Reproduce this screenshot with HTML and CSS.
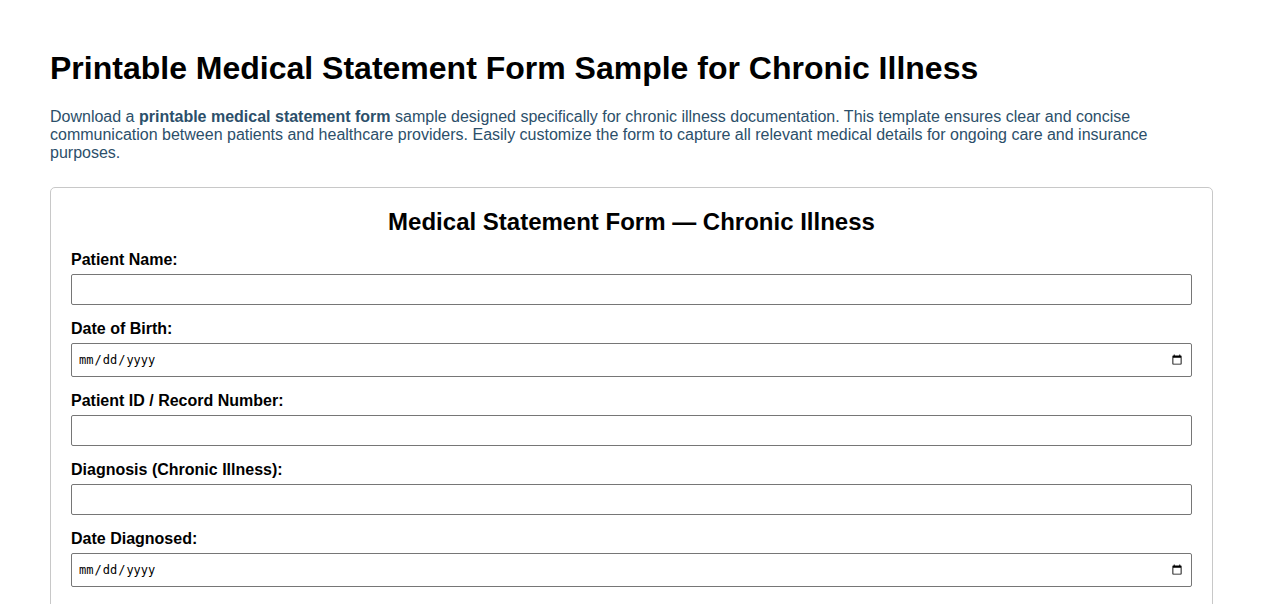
FILE: index.html
```html
<!DOCTYPE html>
<html lang="en">
<head>
<meta charset="utf-8">
<title>Printable Medical Statement Form Sample for Chronic Illness</title>
<link rel="stylesheet" href="styles.css">
</head>
<body>
<main class="page">
  <h1 class="title">Printable Medical Statement Form Sample for Chronic Illness</h1>
  <p class="intro">Download a <strong>printable medical statement form</strong> sample designed specifically for chronic illness documentation. This template ensures clear and concise communication between patients and healthcare providers. Easily customize the form to capture all relevant medical details for ongoing care and insurance purposes.</p>
  <form class="form-box">
    <h2 class="form-title">Medical Statement Form — Chronic Illness</h2>
    <label class="field-label" for="pname">Patient Name:</label>
    <input class="field" type="text" id="pname">
    <label class="field-label" for="dob">Date of Birth:</label>
    <input class="field field-date" type="date" id="dob">
    <label class="field-label" for="pid">Patient ID / Record Number:</label>
    <input class="field" type="text" id="pid">
    <label class="field-label" for="diag">Diagnosis (Chronic Illness):</label>
    <input class="field" type="text" id="diag">
    <label class="field-label" for="ddiag">Date Diagnosed:</label>
    <input class="field field-date" type="date" id="ddiag">
    <label class="field-label" for="hist">Relevant Medical History:</label>
    <textarea class="field field-area" id="hist" rows="4"></textarea>
  </form>
</main>
</body>
</html>
```

FILE: styles.css
```css
html, body {
  margin: 0;
  padding: 0;
  background: #fff;
}
body {
  font-family: "Liberation Sans", Arial, sans-serif;
  color: #000;
}
.page {
  padding: 50px 50px 40px 50px;
}
.title {
  margin: 0;
  font-size: 32px;
  line-height: 37px;
  font-weight: bold;
  color: #000;
}
.intro {
  margin: 21px 0 25px 0;
  font-size: 16px;
  line-height: 18px;
  color: #2c4f6a;
}
.intro strong {
  font-weight: bold;
}
.form-box {
  border: 1px solid #c8c8c8;
  border-radius: 5px;
  padding: 20px;
  display: flex;
  flex-direction: column;
}
.form-title {
  margin: 0 0 14px 0;
  text-align: center;
  font-size: 24px;
  line-height: 28px;
  font-weight: bold;
}
.field-label {
  display: block;
  font-size: 16px;
  line-height: 18px;
  font-weight: bold;
  padding-top: 1px;
  margin: 0 0 5px 0;
}
.field {
  box-sizing: border-box;
  width: 100%;
  height: 31px;
  margin: 0 0 14px 0;
  padding: 4px 6px;
  border: 1px solid #767676;
  border-radius: 2px;
  font-family: "DejaVu Sans Mono", monospace;
  font-size: 12px;
  background: #fff;
  color: #000;
}
.field-date {
  height: 34px;
}
.field-area {
  height: 80px;
  resize: vertical;
}
```
